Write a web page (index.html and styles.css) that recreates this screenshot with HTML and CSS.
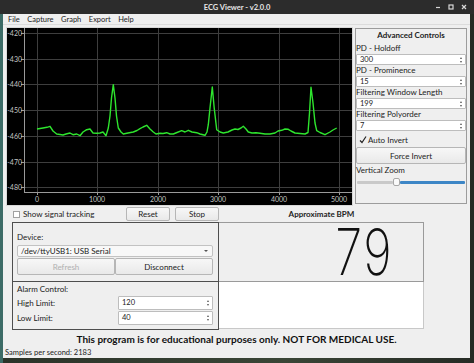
FILE: index.html
```html
<!DOCTYPE html>
<html lang="en">
  <head>
    <meta charset="UTF-8" />
    <title>ECG Viewer - v2.0.0</title>
    <link rel="stylesheet" href="styles.css">
  </head>
  <body>
    <div class="titlebar">
      <span class="title">ECG Viewer - v2.0.0</span>
      <div class="winbtns">
        <svg width="8" height="8" viewBox="0 0 8 8"><path d="M2 4.5h4" stroke="#d8d8d8" stroke-width="1.2"/></svg>
        <svg width="8" height="8" viewBox="0 0 8 8"><rect x="2" y="2" width="4" height="4" fill="none" stroke="#d8d8d8" stroke-width="1.2"/></svg>
        <svg width="8" height="8" viewBox="0 0 8 8"><path d="M2 2l4 4M6 2l-4 4" stroke="#d8d8d8" stroke-width="1.2"/></svg>
      </div>
    </div>

    <div class="window">
      <div class="menubar">
        <span>File</span>
        <span>Capture</span>
        <span>Graph</span>
        <span>Export</span>
        <span>Help</span>
      </div>

      <div class="top">
        <div class="plot">
          <svg width="345" height="177" viewBox="7 30 345 177">
            <rect x="7" y="30" width="345" height="177" fill="#000"/>
            <g stroke="#3e3e3e" stroke-width="1">
              <path d="M37.5 30v164M97.5 30v164M158.5 30v164M218.5 30v164M279.5 30v164M339.5 30v164"/>
              <path d="M24 35.5h328M24 61.5h328M24 86.5h328M24 112.5h328M24 138.5h328M24 164.5h328M24 189.5h328"/>
            </g>
            <g stroke="#9a9a9a" stroke-width="1">
              <path d="M24.5 30v165M24 194.5h328"/>
              <path d="M21 35.5h3M21 61.5h3M21 86.5h3M21 112.5h3M21 138.5h3M21 164.5h3M21 189.5h3"/>
              <path d="M37.5 194v3M97.5 194v3M158.5 194v3M218.5 194v3M279.5 194v3M339.5 194v3"/>
            </g>
            <g class="ylab" text-anchor="end">
              <text x="22" y="38">-420</text>
              <text x="22" y="64">-430</text>
              <text x="22" y="89">-440</text>
              <text x="22" y="115">-450</text>
              <text x="22" y="141">-460</text>
              <text x="22" y="167">-470</text>
              <text x="22" y="192">-480</text>
            </g>
            <g class="xlab" text-anchor="middle">
              <text x="37" y="204">0</text>
              <text x="97" y="204">1000</text>
              <text x="158" y="204">2000</text>
              <text x="218" y="204">3000</text>
              <text x="279" y="204">4000</text>
              <text x="339" y="204">5000</text>
            </g>
            <polyline fill="none" stroke="#2ee52e" stroke-width="1.4" stroke-linejoin="round"
              points="37,131 40,130.5 43,130 47,129.3 50,128.3 53,133 56.7,136 60,136.5 63,137 66,136 70,135 73,136.7 76.7,136 80,137.7 83,134 86.7,131.7 90,131 93,135 97,135.3 100,135 103,134 106,137.7 108.3,130 110,118 111.5,100 113.3,86.7 115,100 116.5,118 118.3,130 121,134 123.3,136 128,135 133.3,134 137,132.5 140,130.7 143,129 146.7,127.3 150,131 153.3,134 156,136 160,135.3 163,135.5 166.7,134.7 170,136 173.3,136 177,134.5 181.7,132.7 185,134 188.3,132.3 192,134 196.7,134.7 200,136 205,137.3 207,134 208.3,126.7 210,110 212.3,89 214.2,110 216.7,131.7 220,134 223.3,135 228,134 232,132 235,131 238,131.5 241,130 243.3,128.3 246,131 248.3,134 252,135 256,134.7 260,135.3 265,136 270,136 275,135 278,133 281.7,132.3 285,131 288.3,131.3 291,133 295,135 300,135.5 305,136 308,134.5 309.5,115 311,89.3 313,105 315,125 316.7,132.7 320,134.5 325,136.7 330,134 333,132 336.7,130"/>
          </svg>
        </div>

        <div class="panel">
          <div class="panel-title">Advanced Controls</div>
          <div class="field-label">PD - Holdoff</div>
          <div class="spin"><span>300</span><i class="arrows"></i></div>
          <div class="field-label">PD - Prominence</div>
          <div class="spin"><span>15</span><i class="arrows"></i></div>
          <div class="field-label">Filtering Window Length</div>
          <div class="spin"><span>199</span><i class="arrows"></i></div>
          <div class="field-label">Filtering Polyorder</div>
          <div class="spin"><span>7</span><i class="arrows"></i></div>
          <div class="check-row">
            <svg width="8" height="8" viewBox="0 0 8 8"><path d="M1 4.5l2 2 4-6" fill="none" stroke="#222" stroke-width="1.2"/></svg>
            <span>Auto Invert</span>
          </div>
          <div class="btn wide">Force Invert</div>
          <div class="field-label zoom-label">Vertical Zoom</div>
          <div class="slider">
            <div class="groove-left"></div>
            <div class="handle"></div>
            <div class="groove-right"></div>
          </div>
        </div>
      </div>

      <div class="controls-row">
        <div class="check-row tracking">
          <span class="box"></span>
          <span>Show signal tracking</span>
        </div>
        <div class="btn small">Reset</div>
        <div class="btn small">Stop</div>
        <div class="bpm-title">Approximate BPM</div>
      </div>

      <div class="bottom">
        <div class="col-left">
          <div class="group device">
            <div class="line">Device:</div>
            <div class="combo"><span>/dev/ttyUSB1: USB Serial</span><i class="caret"></i></div>
            <div class="btn-pair">
              <div class="btn disabled">Refresh</div>
              <div class="btn">Disconnect</div>
            </div>
          </div>
          <div class="group alarm">
            <div class="line">Alarm Control:</div>
            <div class="limit-row">
              <span>High Limit:</span>
              <div class="spin"><span>120</span><i class="arrows"></i></div>
            </div>
            <div class="limit-row">
              <span>Low Limit:</span>
              <div class="spin"><span>40</span><i class="arrows"></i></div>
            </div>
          </div>
        </div>
        <div class="col-mid">
          <div class="lcd"><span>79</span></div>
          <div class="blank"></div>
        </div>
      </div>

      <div class="notice">This program is for educational purposes only. NOT FOR MEDICAL USE.</div>
      <div class="status">Samples per second: 2183</div>
    </div>
  </body>
</html>
```

FILE: styles.css
```css
* {
  margin: 0;
  padding: 0;
  box-sizing: border-box;
}

body {
  width: 474px;
  height: 363px;
  overflow: hidden;
  background: linear-gradient(90deg, #3c6b66 0, #3c6b66 3px, #2b3329 3px, #3a4536 60%, #262b25 100%);
  font-family: Lato, "Noto Sans", sans-serif;
  font-size: 8px;
  color: #222;
}

.titlebar {
  height: 14px;
  background: #2c2c2c;
  position: relative;
  display: flex;
  justify-content: center;
  align-items: center;
}
.title {
  color: #e6e6e6;
  font-weight: bold;
  font-size: 7.5px;
}
.winbtns {
  position: absolute;
  right: 6px;
  top: 3px;
  display: flex;
  gap: 5px;
}

.window {
  margin: 0 4px 0 3px;
  height: 344px;
  background: #efefef;
  display: flex;
  flex-direction: column;
}

.menubar {
  height: 13px;
  display: flex;
  align-items: center;
  gap: 7.5px;
  padding-left: 5px;
  border-bottom: 1px solid #dcdcdc;
  font-size: 7.5px;
}

.top {
  display: flex;
  margin-top: 3px;
  height: 177px;
}
.plot {
  margin-left: 4px;
  width: 345px;
  height: 177px;
  outline: 1px solid #d8d8d8;
}
.plot svg {
  display: block;
}
.ylab text,
.xlab text {
  fill: #c4c4c4;
  font-size: 7px;
  font-family: Lato, "Noto Sans", sans-serif;
}

.panel {
  margin-left: 3px;
  width: 112px;
  height: 176px;
  border: 1px solid #9c9c9c;
  display: flex;
  flex-direction: column;
}
.panel-title {
  text-align: center;
  font-weight: bold;
  line-height: 12px;
  margin-bottom: 2px;
}
.field-label {
  line-height: 11px;
  white-space: nowrap;
}
.zoom-label {
  margin-top: 1px;
}

.spin {
  height: 11px;
  background: #fff;
  border: 1px solid #bdbdbd;
  border-radius: 1px;
  display: flex;
  align-items: center;
  justify-content: space-between;
  padding: 0 2px 0 3px;
  font-size: 7.5px;
}
.arrows {
  width: 3px;
  height: 6px;
  position: relative;
}
.arrows::before,
.arrows::after {
  content: "";
  position: absolute;
  left: 0;
  border-left: 1.5px solid transparent;
  border-right: 1.5px solid transparent;
}
.arrows::before {
  top: 0;
  border-bottom: 2px solid #555;
}
.arrows::after {
  bottom: 0;
  border-top: 2px solid #555;
}

.check-row {
  display: flex;
  align-items: center;
  gap: 1px;
  line-height: 12px;
  margin-top: 3px;
  padding-left: 3px;
}

.btn {
  background: linear-gradient(#f7f7f7, #e9e9e9);
  border: 1px solid #b6b6b6;
  border-radius: 2px;
  display: flex;
  align-items: center;
  justify-content: center;
}
.btn.wide {
  height: 17px;
  margin-top: 1px;
}
.btn.disabled {
  color: #b0b0b0;
}

.slider {
  margin-top: 2px;
  height: 8px;
  display: flex;
  align-items: center;
  padding: 0 1px;
}
.groove-left {
  width: 36px;
  height: 3px;
  background: #c9c9c9;
  border-radius: 1px;
}
.handle {
  width: 7px;
  height: 8px;
  background: #fafafa;
  border: 1px solid #a8a8a8;
  border-radius: 2px;
}
.groove-right {
  flex: 1;
  height: 3px;
  background: #3d86c6;
  border-radius: 1px;
}

.controls-row {
  display: flex;
  align-items: center;
  height: 14px;
  margin-top: 2px;
}
.tracking {
  margin: 0;
  gap: 3px;
  padding-left: 10px;
  width: 123px;
}
.box {
  width: 7px;
  height: 7px;
  background: #fff;
  border: 1px solid #a0a0a0;
}
.btn.small {
  width: 44px;
  height: 14px;
  margin-right: 5px;
}
.bpm-title {
  width: 205px;
  text-align: center;
  font-weight: bold;
  margin-left: -5px;
}

.bottom {
  display: flex;
  margin-top: 1px;
  padding-left: 9px;
}
.col-left {
  width: 207px;
}
.group {
  border: 1px solid #4e4e4e;
  padding: 0 5px 0 4px;
}
.device {
  height: 60px;
  padding-top: 8px;
}
.alarm {
  height: 48px;
  border-top: none;
  padding-top: 1px;
}
.line {
  line-height: 12px;
}
.combo {
  margin-top: 2px;
  height: 12px;
  background: #f8f8f8;
  border: 1px solid #c2c2c2;
  border-radius: 2px;
  display: flex;
  align-items: center;
  justify-content: space-between;
  padding: 0 4px 0 3px;
}
.caret {
  border-left: 2px solid transparent;
  border-right: 2px solid transparent;
  border-top: 2px solid #555;
}
.btn-pair {
  display: flex;
  margin-top: 1px;
}
.btn-pair .btn {
  height: 17px;
  flex: 1;
}
.limit-row {
  display: flex;
  align-items: center;
  justify-content: space-between;
  height: 15px;
}
.limit-row .spin {
  width: 95px;
  height: 14px;
}

.col-mid {
  width: 205px;
}
.lcd {
  height: 60px;
  border: 1px solid #9a9a9a;
  border-left: none;
  background: #efefef;
  display: flex;
  justify-content: flex-end;
  align-items: center;
  padding-right: 30px;
}
.lcd span {
  font-family: Inter, "DejaVu Sans", sans-serif;
  font-weight: 200;
  font-size: 64px;
  line-height: 48px;
  letter-spacing: 2px;
  color: #111;
  display: inline-block;
  transform: scaleX(0.76);
  transform-origin: right center;
}
.blank {
  height: 47px;
  background: #fff;
  border: 1px solid #c8c8c8;
  border-top: none;
  border-left: none;
}

.notice {
  margin-top: 2px;
  text-align: center;
  font-weight: bold;
  font-size: 10px;
  color: #111;
  line-height: 14px;
}
.status {
  margin-top: 2px;
  padding-left: 2px;
  font-size: 7.5px;
  line-height: 10px;
}
```
